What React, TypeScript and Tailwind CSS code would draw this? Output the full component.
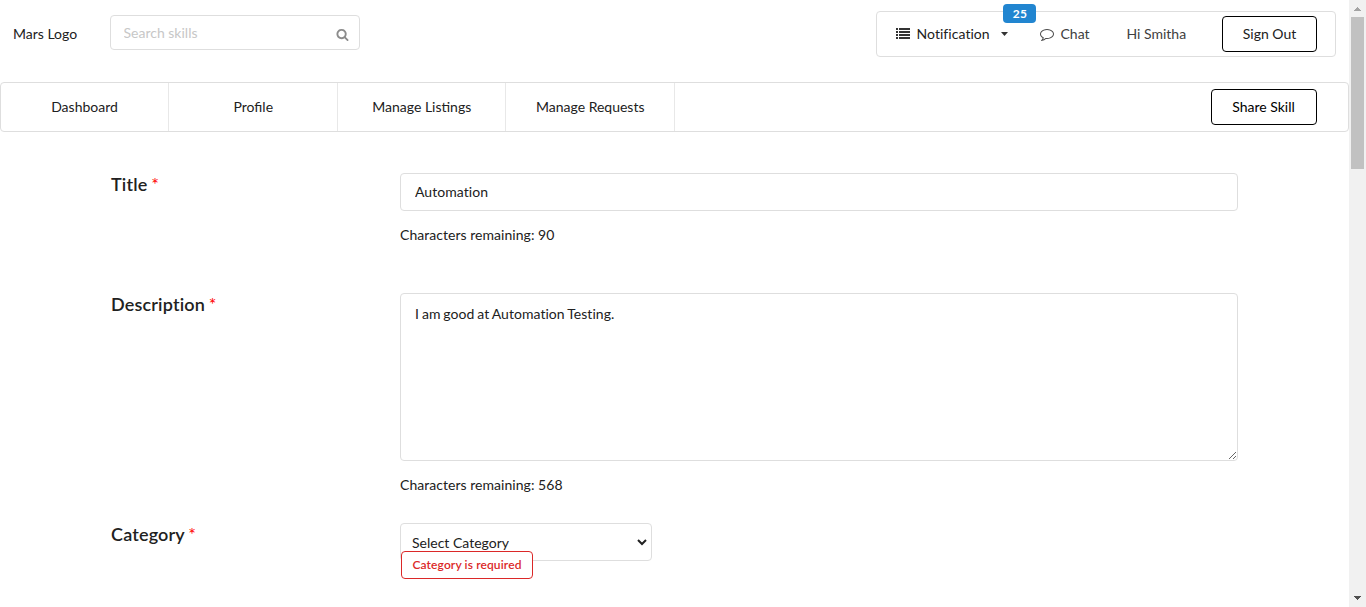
import React from "react";

const SEARCH =
  "M1216 832q0-185-131.5-316.5t-316.5-131.5-316.5 131.5-131.5 316.5 131.5 316.5 316.5 131.5 316.5-131.5 131.5-316.5zm512 832q0 52-38 90t-90 38q-54 0-90-38l-343-342q-179 124-399 124-143 0-273.5-55.5t-225-150-150-225-55.5-273.5 55.5-273.5 150-225 225-150 273.5-55.5 273.5 55.5 225 150 150 225 55.5 273.5q0 220-124 399l343 343q37 37 37 90z";
const COMMENT =
  "M896 384q-204 0-381.5 69.5t-282 187.5-104.5 255q0 112 71.5 213.5t201.5 175.5l87 50-27 96q-24 91-70 172 152-63 275-171l43-38 57 6q69 8 130 8 204 0 381.5-69.5t282-187.5 104.5-255-104.5-255-282-187.5-381.5-69.5zm896 512q0 174-120 321.5t-326 233-450 85.5q-70 0-145-8-198 175-460 242-49 14-114 22h-5q-15 0-27-10.5t-16-27.5v-1q-3-4-.5-12t2-10 4.5-9.5l6-9 7-8.5 8-9q7-8 31-34.5t34.5-38 31-39.5 32.5-51 27-59 26-76q-157-89-247.5-220t-90.5-281q0-174 120-321.5t326-233 450-85.5 450 85.5 326 233 120 321.5z";

function ListIcon() {
  return (
    <svg className="h-[14px] w-[14px]" viewBox="0 0 14 14" fill="#333" shapeRendering="crispEdges">
      {[1, 4, 7, 10].map((y) => (
        <g key={y}>
          <rect x="0" y={y} width="2" height="2" />
          <rect x="3" y={y} width="11" height="2" />
        </g>
      ))}
    </svg>
  );
}

function Header() {
  return (
    <header className="flex h-[82px] items-start">
      <div className="ml-[13px] mt-6 w-[97px] leading-5">Mars Logo</div>
      <div className="mt-[15px] flex h-[35px] w-[250px] items-center rounded border border-[#dedede] pl-[12.5px] pr-[10px]">
        <input
          className="min-w-0 flex-1 bg-transparent pb-px leading-[17px] outline-none placeholder:text-[#c7c7c7]"
          placeholder="Search skills"
        />
        <svg className="mt-[3px] h-[13px] w-[13px]" viewBox="0 0 1792 1792" fill="#8c8c8c">
          <path d={SEARCH} />
        </svg>
      </div>
      <div className="relative ml-auto mr-[13px] mt-[11px] flex h-[46px] w-[460px] items-center rounded border border-[#dedede] pl-[19px]">
        <ListIcon />
        <span className="ml-[6.5px] w-[84.5px] pb-[2px] tracking-[0.05px]">Notification</span>
        <svg className="h-[4px] w-[7px]" viewBox="0 0 7 4" fill="#333">
          <path d="M0 0h7L3.5 4z" />
        </svg>
        <svg className="ml-8 h-[14px] w-[14px]" viewBox="0 0 1792 1792" fill="#4c4c4c">
          <path d={COMMENT} />
        </svg>
        <span className="ml-[6.5px] w-[66px] pb-[2px] text-[#404040]">Chat</span>
        <span className="w-[95.5px] pb-[2px] text-[#404040]">Hi Smitha</span>
        <button className="h-9 w-[95px] rounded border border-black pb-[2px]">Sign Out</button>
        <span className="absolute left-[126px] top-[-8px] flex h-[19px] w-[33px] items-center justify-center rounded bg-[#2185d0] pl-px text-[12px] font-bold tracking-[0.4px] text-white">
          25
        </span>
      </div>
    </header>
  );
}

function Nav() {
  return (
    <nav className="flex h-[50px] items-center rounded border border-[#dedede] pr-[31px]">
      {["Dashboard", "Profile", "Manage Listings", "Manage Requests"].map((t) => (
        <a
          key={t}
          className="flex h-full w-[168.5px] items-center justify-center border-r border-[#e8e8e8] pb-[2px] pl-px [font-variant-ligatures:normal] first:w-[168px] first:pl-0"
        >
          {t}
        </a>
      ))}
      <button className="ml-auto h-9 w-[106px] rounded border border-black pb-[2px] pr-px text-black">Share Skill</button>
    </nav>
  );
}

function Row({ label, className, children }: { label: string; className: string; children: React.ReactNode }) {
  return (
    <section className={`flex items-start ${className}`}>
      <h3 className="w-[289px] text-[18px] font-semibold leading-[23px] tracking-[0.17px]">
        {label} <span className="ml-[-1px] font-normal text-[#f00]">*</span>
      </h3>
      {children}
    </section>
  );
}

function Scrollbar() {
  return (
    <div className="flex w-[17px] shrink-0 flex-col items-center bg-[#f1f1f1]">
      <svg className="h-[17px] w-[17px]" viewBox="0 0 17 17" fill="#a3a3a3" shapeRendering="crispEdges">
        <path d="M8 7h1v1h1v1h1v1h1v1H5v-1h1V9h1V8h1z" />
      </svg>
      <div className="h-[152px] w-[13px] bg-[#c1c1c1]" />
      <svg className="mt-auto h-[17px] w-[17px]" viewBox="0 0 17 17" fill="#505050" shapeRendering="crispEdges">
        <path d="M5 6h7v1h-1v1h-1v1H9v1H8V9H7V8H6V7H5z" />
      </svg>
    </div>
  );
}

export default function App() {
  return (
    <div className="flex h-[607px] overflow-hidden bg-white font-['Lato',sans-serif] text-[14px] text-[#212121] [font-variant-ligatures:no-common-ligatures]">
      <main className="min-w-0 flex-1">
        <Header />
        <Nav />
        <div className="pl-[111px]">
          <Row label="Title" className="h-[161px] pt-[41px]">
            <div>
              <input
                className="block h-[38px] w-[838px] rounded border border-[#dedede] px-[14px] pb-[2px] tracking-[0.05px] outline-none"
                defaultValue="Automation"
              />
              <p className="mt-[14px] leading-5 tracking-[0.04px]">Characters remaining: 90</p>
            </div>
          </Row>
          <Row label="Description" className="h-[230px]">
            <div>
              <textarea
                className="block h-[168px] w-[838px] rounded border border-[#dedede] px-[14px] py-[11px] leading-[18px] tracking-[0.04px] outline-none [word-spacing:-0.7px]"
                defaultValue="I am good at Automation Testing."
              />
              <p className="mt-[14px] leading-5 tracking-[0.04px]">Characters remaining: 568</p>
            </div>
          </Row>
          <Row label="Category" className="">
            <div className="relative">
              <div className="flex h-[38px] w-[252px] items-center justify-between rounded border border-[#dedede] pl-[11px] pr-[4px]">
                <span>Select Category</span>
                <svg className="h-[7px] w-[10px]" viewBox="0 0 10 7" fill="none" stroke="#212121" strokeWidth="2">
                  <path d="M1 1l4 4 4-4" />
                </svg>
              </div>
              <div className="absolute left-px top-[28px] flex h-[28px] w-[132px] items-center justify-center rounded border border-[#db2828] bg-white text-[12px] font-semibold tracking-[0.12px] text-[#db2828]">
                Category is required
              </div>
            </div>
          </Row>
        </div>
      </main>
      <Scrollbar />
    </div>
  );
}
